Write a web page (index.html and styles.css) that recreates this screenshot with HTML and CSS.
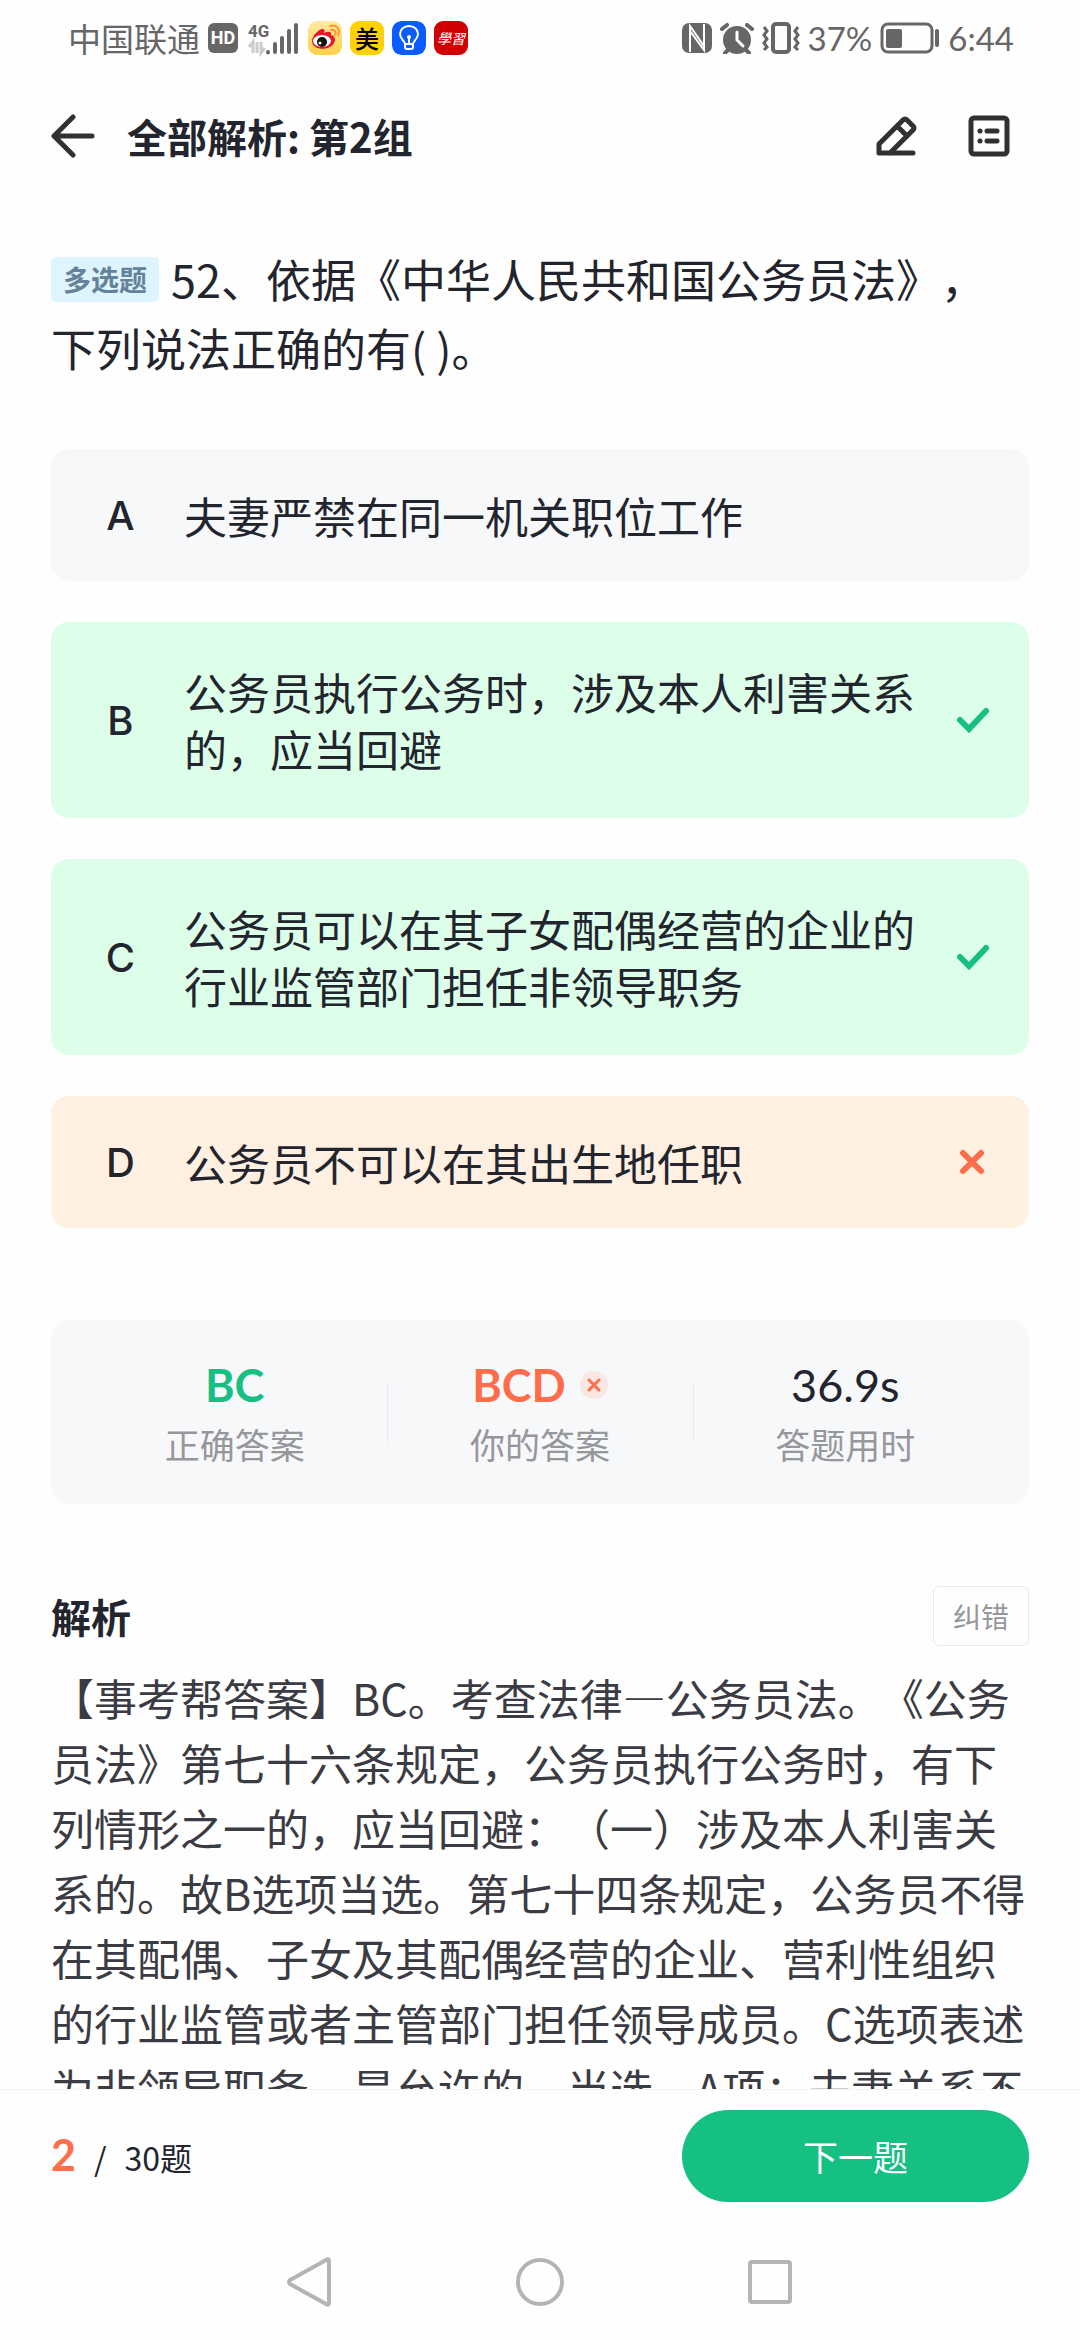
FILE: index.html
```
<!DOCTYPE html>
<html lang="zh-CN">
<head>
    <meta charset="UTF-8">
    <meta name="viewport" content="width=device-width, initial-scale=1.0">
    <title>全部解析: 第2组</title>
    <link rel="stylesheet" href="styles.css">
</head>
<body>
    <!-- 状态栏 -->
    <div class="status-bar">
        <div class="status-left">
            <span class="carrier">中国联通</span>
            <span class="hd-badge">HD</span>
            <svg class="signal" width="52" height="36" viewBox="0 0 52 36" aria-hidden="true">
                <text x="0" y="17" font-size="17" font-weight="700" fill="#666">4G</text>
                <path d="M1 27l4-5v11M9 22v11M13 22v11l4-5" fill="none" stroke="#ccc" stroke-width="3"/>
                <g stroke="#666" stroke-width="4" stroke-linecap="round">
                    <path d="M20 32v0.500M27 24v8M34 18v14M41 11v21M48 5v27"/>
                </g>
            </svg>
            <svg class="app-icon" width="34" height="34" viewBox="0 0 34 34" aria-hidden="true">
                <defs>
                    <linearGradient id="weibo-bg" x1="0" y1="0" x2="0" y2="1">
                        <stop offset="0" stop-color="#ffeaa6"/>
                        <stop offset="1" stop-color="#ffd045"/>
                    </linearGradient>
                </defs>
                <rect width="34" height="34" rx="4" fill="url(#weibo-bg)"/>
                <path d="M4 20c0-5 6-11 10-12 3 0 3 2 2 4 4-2 8-2 7 2 4 1 5 4 3 8-4 8-22 8-22-2z" fill="#e6162d"/>
                <ellipse cx="14" cy="20" rx="9" ry="6" fill="#fff"/>
                <circle cx="14" cy="21" r="5" fill="#111"/>
                <circle cx="12" cy="22" r="1.500" fill="#fff"/>
                <path d="M23 9c3-1 6 2 4 5M22 5c6-2 11 3 8 9" fill="none" stroke="#f99a2d" stroke-width="2" stroke-linecap="round"/>
            </svg>
            <span class="app-icon app-mei">美</span>
            <svg class="app-icon" width="34" height="34" viewBox="0 0 34 34" aria-hidden="true">
                <rect width="34" height="34" rx="9" fill="#0a5cff"/>
                <path d="M13 23c0-3-5-5-5-10a9 8 0 0 1 18 0c0 5-5 7-5 10zM13 23v3q0 2 2 2h4q2 0 2-2v-3M17 23v-6" fill="none" stroke="#fff" stroke-width="2"/>
                <circle cx="17" cy="16" r="2" fill="#fff"/>
            </svg>
            <span class="app-icon app-xue">學習</span>
        </div>
        <div class="status-right">
            <svg width="30" height="30" viewBox="0 0 30 30" aria-hidden="true">
                <rect width="30" height="30" rx="7" fill="#666"/>
                <path d="M8 29V3l14 20V12M22 1v26L8 8v11" fill="none" stroke="#fff" stroke-width="2"/>
            </svg>
            <svg width="34" height="31" viewBox="0 0 34 31" aria-hidden="true">
                <circle cx="17" cy="17" r="14" fill="#666"/>
                <path d="M2 6l5-4M32 6l-5-4M5 30l4-4M29 30l-4-4" stroke="#666" stroke-width="4" stroke-linecap="round"/>
                <path d="M17 9v8l6 6" fill="none" stroke="#fff" stroke-width="3" stroke-linecap="round"/>
            </svg>
            <svg width="38" height="32" viewBox="0 0 38 32" aria-hidden="true">
                <rect x="11" y="2" width="16" height="28" rx="3" fill="none" stroke="#666" stroke-width="4"/>
                <path d="M2 5l3 4-3 4 3 4-3 4 3 4-3 3M36 5l-3 4 3 4-3 4 3 4-3 4 3 3" fill="none" stroke="#666" stroke-width="3"/>
            </svg>
            <span class="percent">37%</span>
            <svg width="60" height="32" viewBox="0 0 60 32" aria-hidden="true">
                <rect x="2" y="2" width="50" height="28" rx="6" fill="none" stroke="#666" stroke-width="3"/>
                <rect x="6" y="7" width="16" height="19" rx="2" fill="#666"/>
                <path d="M57 9v14" stroke="#666" stroke-width="4" stroke-linecap="round"/>
            </svg>
            <span class="clock">6:44</span>
        </div>
    </div>

    <!-- 顶部导航 -->
    <header class="header">
        <button class="icon-button" type="button" aria-label="返回">
            <svg width="44" height="44" viewBox="0 0 44 44" fill="none" stroke="#2f3133" stroke-width="5" stroke-linecap="round" stroke-linejoin="round">
                <path d="M22 3L3 22l19 19M3 22h38"/>
            </svg>
        </button>
        <h1>全部解析: 第2组</h1>
        <button class="icon-button" type="button" aria-label="笔记">
            <svg width="44" height="44" viewBox="0 0 44 44" fill="none" stroke="#2f3133" stroke-width="5" stroke-linecap="round" stroke-linejoin="round">
                <path d="M4 39V30L28 6q2-2 4 0l6 6q2 2 0 4L15 39M4 39h34M22 12l10 10"/>
            </svg>
        </button>
        <button class="icon-button" type="button" aria-label="答题卡">
            <svg width="44" height="44" viewBox="0 0 44 44" fill="none" stroke="#2f3133" stroke-width="5" stroke-linecap="round">
                <rect x="4" y="4" width="36" height="36" rx="3"/>
                <path d="M13 17h0.100M20 17h10M13 27h0.100M20 27h10"/>
            </svg>
        </button>
    </header>

    <!-- 题目内容 -->
    <main class="content">
        <p class="question"><span class="tag">多选题</span>52、依据《中华人民共和国公务员法》，下列说法正确的有( )。</p>

        <div class="options">
            <button class="option" type="button">
                <span class="option-key">A</span>
                <span class="option-text">夫妻严禁在同一机关职位工作</span>
            </button>
            <button class="option option-tall correct" type="button">
                <span class="option-key">B</span>
                <span class="option-text">公务员执行公务时，涉及本人利害关系的，应当回避</span>
                <svg class="mark" width="36" height="36" viewBox="0 0 36 36"><path d="M5 18l9 9L31 9"/></svg>
            </button>
            <button class="option option-tall correct" type="button">
                <span class="option-key">C</span>
                <span class="option-text">公务员可以在其子女配偶经营的企业的行业监管部门担任非领导职务</span>
                <svg class="mark" width="36" height="36" viewBox="0 0 36 36"><path d="M5 18l9 9L31 9"/></svg>
            </button>
            <button class="option wrong" type="button">
                <span class="option-key">D</span>
                <span class="option-text">公务员不可以在其出生地任职</span>
                <svg class="mark" width="36" height="36" viewBox="0 0 36 36"><path d="M8 9l18 18M26 9L8 27"/></svg>
            </button>
        </div>

        <!-- 作答统计 -->
        <div class="stats">
            <div class="stat">
                <strong class="stat-value green">BC</strong>
                <span class="stat-label">正确答案</span>
            </div>
            <div class="stat">
                <strong class="stat-value orange">BCD
                    <svg width="28" height="28" viewBox="0 0 28 28"><circle cx="14" cy="14" r="14" fill="#fae6e2"/><path d="M9 9l10 10M19 9L9 19" stroke="#ff6d4a" stroke-width="3" stroke-linecap="round"/></svg>
                </strong>
                <span class="stat-label">你的答案</span>
            </div>
            <div class="stat">
                <span class="stat-value">36.9s</span>
                <span class="stat-label">答题用时</span>
            </div>
        </div>

        <!-- 解析 -->
        <section class="analysis">
            <div class="analysis-head">
                <h2>解析</h2>
                <button class="report" type="button">纠错</button>
            </div>
            <p>【事考帮答案】BC。考查法律—公务员法。《公务员法》第七十六条规定，公务员执行公务时，有下列情形之一的，应当回避：（一）涉及本人利害关系的。故B选项当选。第七十四条规定，公务员不得在其配偶、子女及其配偶经营的企业、营利性组织的行业监管或者主管部门担任领导成员。C选项表述为非领导职务，是允许的，当选。A项：夫妻关系不</p>
        </section>
    </main>

    <!-- 底部操作栏 -->
    <footer class="bottom-bar">
        <div class="progress"><strong>2</strong><span>/</span><span>30题</span></div>
        <button class="next" type="button">下一题</button>
    </footer>

    <!-- 系统导航键 -->
    <nav class="system-nav">
        <button class="icon-button" type="button" aria-label="返回键">
            <svg width="52" height="52" viewBox="0 0 52 52"><path d="M45 5v42q0 3-3 1L6 28q-2-2 0-4L42 4q3-2 3 1z"/></svg>
        </button>
        <button class="icon-button" type="button" aria-label="主页键">
            <svg width="52" height="52" viewBox="0 0 52 52"><circle cx="26" cy="26" r="22"/></svg>
        </button>
        <button class="icon-button" type="button" aria-label="最近任务">
            <svg width="52" height="52" viewBox="0 0 52 52"><rect x="6" y="6" width="40" height="40" rx="2"/></svg>
        </button>
    </nav>
</body>
</html>
```
FILE: styles.css
```
* {
    box-sizing: border-box;
}
body {
    margin: 0;
    height: 100vh;
    display: flex;
    flex-direction: column;
    overflow: hidden;
    background-color: #fefefe;
    color: #23252e;
    font-family: "Noto Sans CJK SC", sans-serif;
    text-spacing-trim: space-all;
}
button {
    font-family: inherit;
    color: inherit;
    border: none;
    padding: 0;
    background: none;
    cursor: pointer;
}
svg {
    display: block;
    flex: none;
}
h1, h2, p {
    margin: 0;
}

/* 状态栏 */
.status-bar {
    display: flex;
    justify-content: space-between;
    align-items: center;
    height: 76px;
    padding: 0 66px 0 68px;
    color: #666;
    font-size: 33px;
    flex: none;
}
.status-left, .status-right {
    display: flex;
    align-items: center;
    gap: 8px;
}
.hd-badge {
    width: 30px;
    height: 30px;
    border-radius: 6px;
    background-color: #666;
    color: #fff;
    font-family: Roboto, sans-serif;
    font-size: 18px;
    font-weight: 700;
    line-height: 30px;
    text-align: center;
}
.signal {
    font-family: Roboto, sans-serif;
    margin-left: 2px;
    overflow: visible;
}
.app-icon {
    width: 34px;
    height: 34px;
    line-height: 34px;
    text-align: center;
    border-radius: 9px;
}
.app-mei {
    background-color: #ffd100;
    color: #000;
    font-size: 24px;
    font-weight: 500;
}
.app-xue {
    background-color: #d00000;
    color: #fff;
    font-size: 14px;
    font-style: italic;
}
.percent, .clock {
    font-family: Lato, sans-serif;
}

/* 顶部导航 */
.header {
    display: flex;
    align-items: center;
    gap: 48px;
    height: 120px;
    padding: 0 69px 0 51px;
    flex: none;
}
.header h1 {
    flex: 1;
    margin-left: -16px;
    font-size: 40px;
    font-weight: 700;
    line-height: 60px;
}

/* 题目 */
.content {
    flex: 1;
    min-height: 0;
    overflow: hidden;
    padding: 48px 51px 0;
}
.question {
    padding-right: 12px;
    font-size: 45px;
    line-height: 69px;
}
.tag {
    display: inline-block;
    margin-right: 12px;
    padding: 0 12px;
    border-radius: 5px;
    background-color: #def4ff;
    color: #648399;
    font-size: 28px;
    font-weight: 700;
    line-height: 45px;
    vertical-align: 7px;
}
.options {
    display: flex;
    flex-direction: column;
    gap: 41px;
    margin-top: 67px;
}
.option {
    display: flex;
    align-items: center;
    min-height: 132px;
    padding: 0 38px 0 48px;
    border-radius: 18px;
    background-color: #f7f8fa;
    font-size: 43px;
    line-height: 57px;
    text-align: left;
}
.option-tall {
    min-height: 196px;
}
.option-key {
    width: 43px;
    margin-right: 42px;
    font-family: Inter, sans-serif;
    font-size: 40px;
    font-weight: 500;
    text-align: center;
}
.option-text {
    flex: 1;
    margin-right: 30px;
}
.mark {
    fill: none;
    stroke-width: 6;
    stroke-linecap: round;
}
.correct {
    background-color: #ddffea;
}
.correct .mark {
    stroke: #17c082;
}
.wrong {
    background-color: #fff0e1;
}
.wrong .mark {
    stroke: #ff6d4a;
}

/* 作答统计 */
.stats {
    display: flex;
    align-items: center;
    height: 184px;
    margin-top: 92px;
    padding: 0 31px;
    border-radius: 18px;
    background-color: #f7f8fa;
}
.stat {
    position: relative;
    flex: 1;
    display: flex;
    flex-direction: column;
    align-items: center;
}
.stat + .stat::before {
    content: "";
    position: absolute;
    left: 0;
    top: 30px;
    width: 1px;
    height: 60px;
    background-color: #ebecef;
}
.stat-value {
    display: flex;
    align-items: center;
    gap: 14px;
    font-family: Lato, sans-serif;
    font-size: 45px;
    line-height: 64px;
}
.stat-label {
    color: #96979b;
    font-size: 35px;
    line-height: 54px;
}
.green {
    color: #17c082;
}
.orange {
    color: #ff6d4a;
}

/* 解析 */
.analysis {
    margin-top: 82px;
}
.analysis-head {
    display: flex;
    align-items: center;
    justify-content: space-between;
    margin-bottom: 19px;
}
.analysis h2 {
    font-size: 40px;
    font-weight: 700;
    line-height: 56px;
}
.report {
    width: 96px;
    height: 60px;
    border: 1px solid #e9eaec;
    border-radius: 6px;
    color: #96979b;
    font-size: 28px;
}
.analysis p {
    color: #3a3b43;
    font-size: 43px;
    line-height: 65px;
}

/* 底部操作栏 */
.bottom-bar {
    display: flex;
    align-items: center;
    justify-content: space-between;
    height: 134px;
    padding: 0 51px 2px;
    border-top: 1px solid #f5f5f6;
    flex: none;
}
.progress {
    display: flex;
    align-items: baseline;
    gap: 18px;
    font-size: 32px;
    line-height: 60px;
}
.progress strong {
    color: #ff6d4a;
    font-family: Lato, sans-serif;
    font-size: 43px;
}
.next {
    width: 347px;
    height: 92px;
    border-radius: 46px;
    background-color: #14c082;
    color: #fff;
    font-size: 35px;
}
.system-nav {
    display: flex;
    justify-content: center;
    align-items: center;
    gap: 178px;
    height: 117px;
    flex: none;
}
.system-nav svg {
    fill: none;
    stroke: #b4b4b4;
    stroke-width: 4;
}
```
